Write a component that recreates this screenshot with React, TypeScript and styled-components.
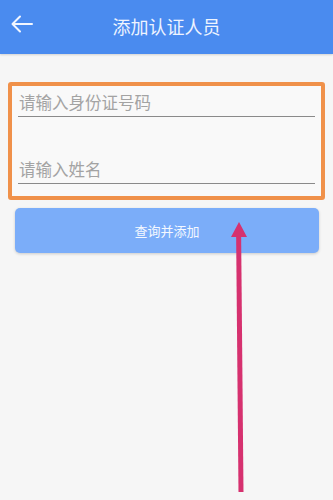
import React from "react";
import styled, { createGlobalStyle } from "styled-components";

const Global = createGlobalStyle`
  html, body { margin: 0; padding: 0; background: #f6f6f6; }
  body { font-family: "Noto Sans CJK SC", "Noto Sans", sans-serif; }
  * { box-sizing: border-box; }
`;

const Page = styled.div`
  position: relative;
  width: 333px;
  height: 500px;
  background: #f6f6f6;
  overflow: hidden;
`;

const Header = styled.div`
  height: 54px;
  background: #4a8bef;
  display: flex;
  align-items: center;
  position: relative;
  justify-content: center;
  box-shadow: 0 1px 2px rgba(0, 0, 0, 0.15);
`;

const BackBtn = styled.div`
  position: absolute;
  left: 10px;
  top: 13px;
  width: 24px;
  height: 24px;
  display: flex;
`;

const Title = styled.div`
  color: #eef4ff;
  font-size: 18px;
  margin-top: -2px;
  letter-spacing: 0px;
`;

const Content = styled.div`
  padding: 28px 8px 0 8px;
  display: flex;
  flex-direction: column;
  align-items: stretch;
`;

const Highlight = styled.div`
  width: 317px;
  border: 4px solid #f0914a;
  border-radius: 3px;
  padding: 0 6px 12px 6px;
  background: #f9f9f9;
  display: flex;
  flex-direction: column;
  gap: 36px;
`;

const Field = styled.div`
  height: 31px;
  border-bottom: 1px solid #8a8a8a;
  padding: 7px 0 0 1px;
  font-size: 16.5px;
  line-height: 18px;
  color: #a3a3a3;
`;

const Button = styled.div`
  margin: 8px 6px 0 7px;
  height: 45px;
  border-radius: 5px;
  background: #7badf9;
  color: #f4f8ff;
  font-size: 13px;
  display: flex;
  align-items: center;
  justify-content: center;
  box-shadow: 0 1px 3px rgba(0, 0, 0, 0.18);
`;

const Overlay = styled.svg`
  position: absolute;
  left: 0;
  top: 0;
  pointer-events: none;
`;

export default function App() {
  return (
    <Page>
      <Global />
      <Header>
        <BackBtn>
          <svg width="24" height="24" viewBox="0 0 24 24" fill="none" stroke="#f2f6ff" strokeWidth="2" strokeLinecap="round" strokeLinejoin="round">
            <path d="M22 11H3" />
            <path d="M10 3.5L2.5 11L10 18.5" />
          </svg>
        </BackBtn>
        <Title>添加认证人员</Title>
      </Header>
      <Content>
        <Highlight>
          <Field>请输入身份证号码</Field>
          <Field>请输入姓名</Field>
        </Highlight>
        <Button>查询并添加</Button>
      </Content>
      <Overlay width="333" height="500" viewBox="0 0 333 500">
        <line x1="241" y1="492" x2="238.6" y2="232" stroke="#d6316f" strokeWidth="5" />
        <polygon points="239,222 231,237 247,237" fill="#d6316f" />
      </Overlay>
    </Page>
  );
}
